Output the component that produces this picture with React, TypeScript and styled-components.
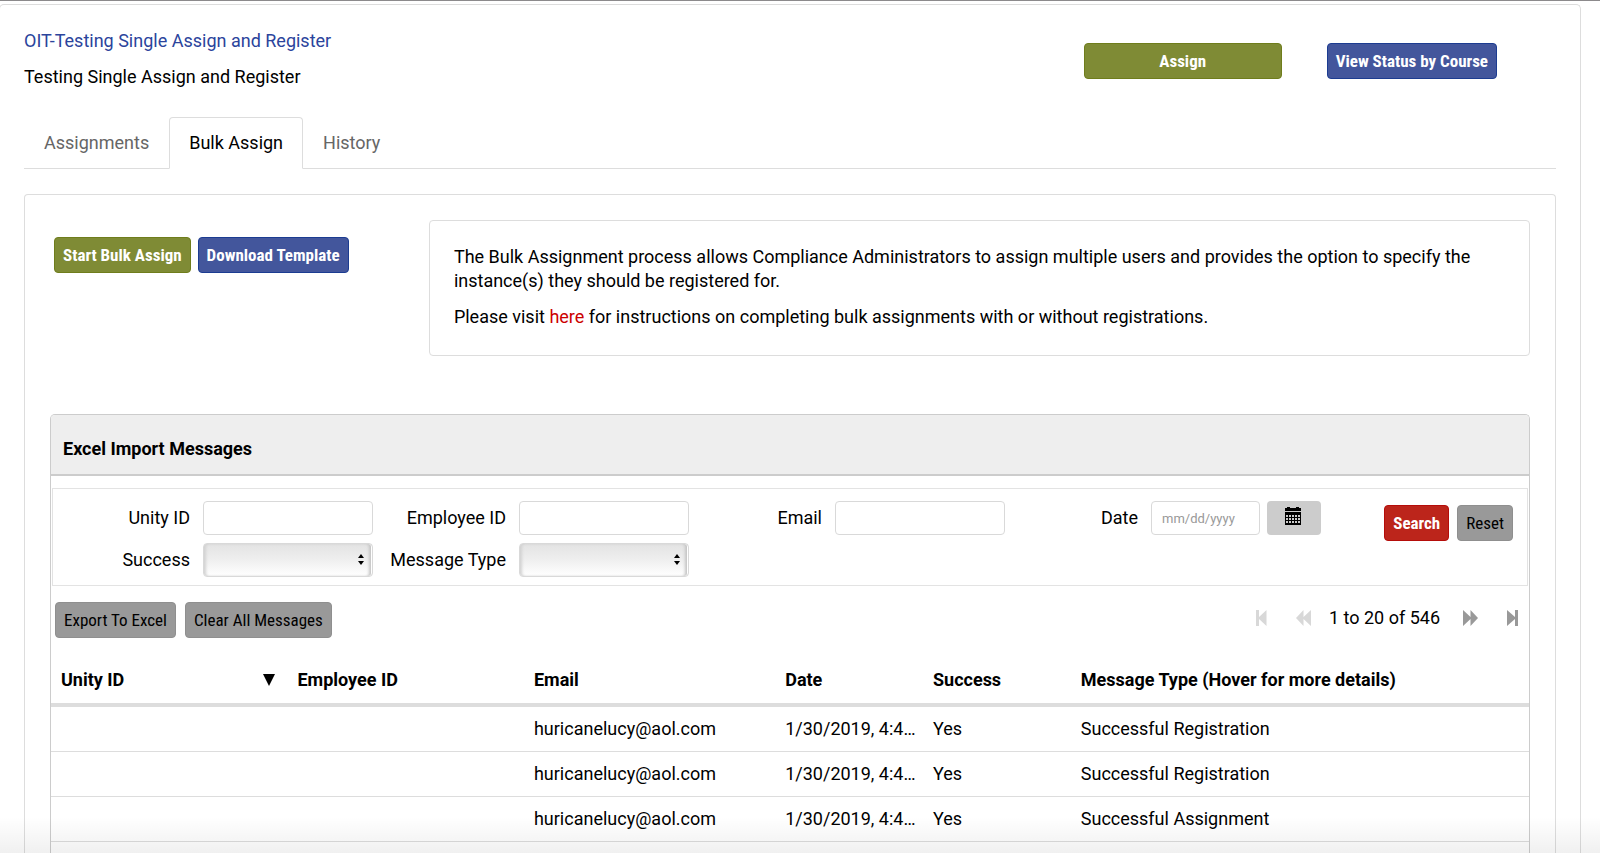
import React from "react";
import styled, { createGlobalStyle, css } from "styled-components";

const GlobalStyle = createGlobalStyle`
  *, *::before, *::after { box-sizing: border-box; }
  html, body, #root { height: 100%; }
  body {
    margin: 0;
    overflow: hidden;
    background: #fff;
    color: #000;
    font: 18px/24px Roboto, "Liberation Sans", sans-serif;
  }
  button, input, select { font: inherit; color: inherit; margin: 0; }
`;

const Page = styled.div`
  position: relative;
  display: flex;
  height: 100%;
  overflow: hidden;
  padding-right: 19px;
  border-top: 1px solid #8c8a8c;
`;

const BottomShade = styled.div`
  position: absolute;
  inset: auto 0 0 0;
  height: 36px;
  pointer-events: none;
  background: linear-gradient(rgba(0, 0, 0, 0), rgba(0, 0, 0, 0.06));
`;

const Card = styled.main`
  flex: 1;
  min-width: 0;
  display: flex;
  flex-direction: column;
  margin-top: 3px;
  margin-left: -1px;
  padding: 24px 24px 0;
  border: 1px solid #ddd;
  border-bottom: 0;
  border-radius: 5px 5px 0 0;
`;

const PageHeader = styled.header`
  display: flex;
  justify-content: space-between;
  align-items: flex-start;
  padding-right: 59px;
`;

const Title = styled.h1`
  margin: 0 0 12px;
  font-size: 18px;
  font-weight: 400;
`;

const Description = styled.p`
  margin: 0;
`;

const TextLink = styled.a<{ $color: string }>`
  color: ${(p) => p.$color};
  text-decoration: none;
`;

const HeaderActions = styled.div`
  display: flex;
  gap: 45px;
  padding-top: 14px;
`;

type Tone = "green" | "blue" | "red" | "gray";

const tones: Record<Tone, ReturnType<typeof css>> = {
  green: css`background: #7f8b35; border-color: #6f7d1c; color: #fff; font-weight: 700;`,
  blue: css`background: #43569c; border-color: #1c3c91; color: #fff; font-weight: 700;`,
  red: css`background: #bc251b; border-color: #b50d0a; color: #fff; font-weight: 700;`,
  gray: css`background: #999; border-color: #8f8f8f; color: #000; font-weight: 400;`,
};

const Button = styled.button<{ $tone: Tone; $wide?: boolean }>`
  height: 36px;
  padding: 0 8px;
  border: 1px solid;
  border-radius: 4px;
  font-family: "Roboto Condensed", Roboto, "Liberation Sans", sans-serif;
  font-size: 17px;
  line-height: 24px;
  white-space: nowrap;
  ${(p) => tones[p.$tone]}
  ${(p) => p.$wide && css`width: 198px;`}
`;

const ButtonRow = styled.div<{ $gap: number }>`
  display: flex;
  gap: ${(p) => p.$gap}px;
`;

const Tabs = styled.nav`
  display: flex;
  margin-top: 28px;
  border-bottom: 1px solid #ddd;
`;

const Tab = styled.a<{ $active?: boolean }>`
  margin-bottom: -1px;
  padding: 13px 19px;
  border: 1px solid ${(p) => (p.$active ? "#ddd" : "transparent")};
  border-bottom-color: ${(p) => (p.$active ? "#fff" : "transparent")};
  border-radius: 4px 4px 0 0;
  color: ${(p) => (p.$active ? "#000" : "#666")};
  text-decoration: none;
`;

const TabPanel = styled.section`
  flex: 1 0 auto;
  display: flex;
  flex-direction: column;
  margin-top: 25px;
  padding: 25px 25px 0;
  border: 1px solid #ddd;
  border-bottom: 0;
  border-radius: 4px 4px 0 0;
`;

const Intro = styled.div`
  display: flex;
  align-items: flex-start;
  justify-content: space-between;
`;

const IntroActions = styled(ButtonRow)`
  padding: 17px 0 0 4px;
`;

const InfoBox = styled.div`
  width: 74.4%;
  padding: 24px 24px 14px;
  border: 1px solid #ddd;
  border-radius: 4px;

  p {
    margin: 0 0 12px;
  }
`;

const Grid = styled.section`
  flex: 1 0 auto;
  margin-top: 58px;
  border: 1px solid #ccc;
  border-bottom: 0;
  border-radius: 5px 5px 0 0;
`;

const GridTitle = styled.h2`
  margin: 0;
  padding: 22px 12px 13px;
  background: #eee;
  border-bottom: 2px solid #ccc;
  border-radius: 4px 4px 0 0;
  font-size: 18px;
  font-weight: 700;
`;

const Filters = styled.form`
  display: grid;
  grid-template-columns: repeat(4, 316fr) 206fr;
  margin: 12px 1px 0;
  padding: 12px 0 8px 4px;
  border: 1px solid #e3e3e3;
`;

const FilterColumn = styled.div`
  display: flex;
  flex-direction: column;
  gap: 8px;
`;

const Field = styled.div`
  display: flex;
  align-items: center;
  justify-content: flex-end;
  gap: 13px;
`;

const Control = styled.div`
  display: flex;
  gap: 7px;
  width: 170px;
`;

const fieldBox = css`
  min-width: 0;
  flex: 1;
  height: 34px;
  border: 1px solid #d9d9d9;
  border-radius: 4px;
`;

const TextInput = styled.input`
  ${fieldBox}
  padding: 0 10px;
  background: #fff;
  font-size: 13px;

  &::placeholder {
    color: #999;
    opacity: 1;
  }
`;

const SelectBox = styled.div`
  position: relative;
  display: flex;
  flex: 1;

  svg {
    position: absolute;
    right: 8px;
    top: 10px;
    pointer-events: none;
  }
`;

const Select = styled.select`
  ${fieldBox}
  appearance: none;
  padding: 0 24px 0 10px;
  background: linear-gradient(#e3e3e3, #efefef 50%, #fff);
  box-shadow: inset -1px 0 0 #fff, inset -4px 0 3px -1px #c4c4c4, inset 3px 0 3px -1px #d2d2d2;
`;

const CalendarButton = styled.button`
  display: flex;
  align-items: flex-start;
  justify-content: center;
  width: 54px;
  height: 34px;
  padding: 6px 2px 0 0;
  border: 0;
  border-radius: 4px;
  background: #ccc;
`;

const FilterActions = styled(ButtonRow)`
  justify-content: flex-end;
  padding: 4px 14px 0 0;
`;

const Toolbar = styled.div`
  display: flex;
  justify-content: space-between;
  padding: 16px 11px 0 4px;
`;

const Pager = styled.div`
  display: flex;
  align-items: center;
  height: 32px;
`;

const PagerButton = styled.button<{ $width: number }>`
  display: flex;
  width: ${(p) => p.$width}px;
  padding: 0;
  border: 0;
  background: none;
  color: #999;

  &:disabled {
    color: #d8d8d8;
  }
`;

const PagerText = styled.span`
  margin-right: 23px;
`;

const Table = styled.table`
  width: 100%;
  margin-top: 19px;
  border-collapse: separate;
  border-spacing: 0;
  table-layout: fixed;
`;

const HeadCell = styled.th<{ $share: number }>`
  width: ${(p) => p.$share}%;
  height: 50px;
  padding: 0 12px 0 10px;
  border-bottom: 4px solid #ddd;
  text-align: left;
  font-weight: 700;
  white-space: nowrap;
`;

const HeadContent = styled.span`
  display: flex;
  align-items: center;
  justify-content: space-between;
`;

const Cell = styled.td`
  height: 45px;
  padding: 0 4px 0 10px;
  border-bottom: 1px solid #ddd;
  overflow: hidden;
  text-overflow: ellipsis;
  white-space: nowrap;
`;

const CalendarIcon = () => (
  <svg width="16" height="18" viewBox="0 0 16 18" aria-hidden="true">
    <path
      fillRule="evenodd"
      d="M0 1h2V0h3v1h6V0h3v1h2v3H0zM0 5h16v13H0zM1 8v2h2V8zm3 0v2h2V8zm3 0v2h2V8zm3 0v2h2V8zm3 0v2h2V8zM1 11v2h2v-2zm3 0v2h2v-2zm3 0v2h2v-2zm3 0v2h2v-2zm3 0v2h2v-2zM1 14v2h2v-2zm3 0v2h2v-2zm3 0v2h2v-2zm3 0v2h2v-2zm3 0v2h2v-2z"
    />
  </svg>
);

const FirstIcon = () => (
  <svg width="11" height="16" viewBox="0 0 11 16" fill="currentColor" aria-hidden="true">
    <path d="M0 0h3v7l7.500-7v16L3 9v7H0z" />
  </svg>
);

const PreviousIcon = () => (
  <svg width="15" height="16" viewBox="0 0 15 16" fill="currentColor" aria-hidden="true">
    <path d="M0 8l7.500-8v7L15 0v16L7.500 9v7z" />
  </svg>
);

const NextIcon = () => (
  <svg width="15" height="16" viewBox="0 0 15 16" fill="currentColor" aria-hidden="true">
    <path d="M15 8L7.500 0v7L0 0v16l7.500-7v7z" />
  </svg>
);

const LastIcon = () => (
  <svg width="11" height="16" viewBox="0 0 11 16" fill="currentColor" aria-hidden="true">
    <path d="M11 0H8v7L0 0v16l8-7v7h3z" />
  </svg>
);

const SelectArrows = () => (
  <svg width="8" height="13" viewBox="0 0 8 13" aria-hidden="true">
    <path d="M1 5L4 1l3 4zM1 8h6l-3 4z" />
  </svg>
);

const SortIcon = () => (
  <svg width="12" height="12" viewBox="0 0 12 12" aria-hidden="true">
    <path d="M0 0h12L6 12z" />
  </svg>
);

const TextField = ({ id, label }: { id: string; label: string }) => (
  <Field>
    <label htmlFor={id}>{label}</label>
    <Control>
      <TextInput id={id} type="text" />
    </Control>
  </Field>
);

const SelectField = ({ id, label }: { id: string; label: string }) => (
  <Field>
    <label htmlFor={id}>{label}</label>
    <Control>
      <SelectBox>
        <Select id={id} defaultValue="">
          <option value="" />
        </Select>
        <SelectArrows />
      </SelectBox>
    </Control>
  </Field>
);

const columns = [
  { label: "Unity ID", share: 16, sorted: true },
  { label: "Employee ID", share: 16 },
  { label: "Email", share: 17 },
  { label: "Date", share: 10 },
  { label: "Success", share: 10 },
  { label: "Message Type (Hover for more details)", share: 31 },
];

const rows = [
  ["", "", "huricanelucy@aol.com", "1/30/2019, 4:4…", "Yes", "Successful Registration"],
  ["", "", "huricanelucy@aol.com", "1/30/2019, 4:4…", "Yes", "Successful Registration"],
  ["", "", "huricanelucy@aol.com", "1/30/2019, 4:4…", "Yes", "Successful Assignment"],
];

export default function App() {
  return (
    <>
      <GlobalStyle />
      <Page>
        <Card>
          <PageHeader>
            <div>
              <Title>
                <TextLink href="#course" $color="#2b449c">OIT-Testing Single Assign and Register</TextLink>
              </Title>
              <Description>Testing Single Assign and Register</Description>
            </div>
            <HeaderActions>
              <Button type="button" $tone="green" $wide>Assign</Button>
              <Button type="button" $tone="blue">View Status by Course</Button>
            </HeaderActions>
          </PageHeader>

          <Tabs>
            <Tab href="#assignments">Assignments</Tab>
            <Tab href="#bulk-assign" $active aria-current="page">Bulk Assign</Tab>
            <Tab href="#history">History</Tab>
          </Tabs>

          <TabPanel>
            <Intro>
              <IntroActions $gap={7}>
                <Button type="button" $tone="green">Start Bulk Assign</Button>
                <Button type="button" $tone="blue">Download Template</Button>
              </IntroActions>
              <InfoBox>
                <p>
                  The Bulk Assignment process allows Compliance Administrators to assign multiple users and provides the
                  option to specify the instance(s) they should be registered for.
                </p>
                <p>
                  Please visit <TextLink href="#instructions" $color="#c00">here</TextLink> for instructions on
                  completing bulk assignments with or without registrations.
                </p>
              </InfoBox>
            </Intro>

            <Grid>
              <GridTitle>Excel Import Messages</GridTitle>
              <Filters>
                <FilterColumn>
                  <TextField id="unity-id" label="Unity ID" />
                  <SelectField id="success" label="Success" />
                </FilterColumn>
                <FilterColumn>
                  <TextField id="employee-id" label="Employee ID" />
                  <SelectField id="message-type" label="Message Type" />
                </FilterColumn>
                <FilterColumn>
                  <TextField id="email" label="Email" />
                </FilterColumn>
                <FilterColumn>
                  <Field>
                    <label htmlFor="date">Date</label>
                    <Control>
                      <TextInput id="date" type="text" placeholder="mm/dd/yyyy" />
                      <CalendarButton type="button" aria-label="Choose date">
                        <CalendarIcon />
                      </CalendarButton>
                    </Control>
                  </Field>
                </FilterColumn>
                <FilterActions $gap={8}>
                  <Button type="button" $tone="red">Search</Button>
                  <Button type="reset" $tone="gray">Reset</Button>
                </FilterActions>
              </Filters>

              <Toolbar>
                <ButtonRow $gap={9}>
                  <Button type="button" $tone="gray">Export To Excel</Button>
                  <Button type="button" $tone="gray">Clear All Messages</Button>
                </ButtonRow>
                <Pager>
                  <PagerButton type="button" $width={40} disabled aria-label="First page"><FirstIcon /></PagerButton>
                  <PagerButton type="button" $width={33} disabled aria-label="Previous page"><PreviousIcon /></PagerButton>
                  <PagerText>1 to 20 of 546</PagerText>
                  <PagerButton type="button" $width={44} aria-label="Next page"><NextIcon /></PagerButton>
                  <PagerButton type="button" $width={11} aria-label="Last page"><LastIcon /></PagerButton>
                </Pager>
              </Toolbar>

              <Table>
                <thead>
                  <tr>
                    {columns.map((column) => (
                      <HeadCell key={column.label} $share={column.share} scope="col">
                        <HeadContent>
                          {column.label}
                          {column.sorted && <SortIcon />}
                        </HeadContent>
                      </HeadCell>
                    ))}
                  </tr>
                </thead>
                <tbody>
                  {rows.map((row, rowIndex) => (
                    <tr key={rowIndex}>
                      {row.map((value, index) => (
                        <Cell key={index}>{value}</Cell>
                      ))}
                    </tr>
                  ))}
                </tbody>
              </Table>
            </Grid>
          </TabPanel>
        </Card>
        <BottomShade />
      </Page>
    </>
  );
}
